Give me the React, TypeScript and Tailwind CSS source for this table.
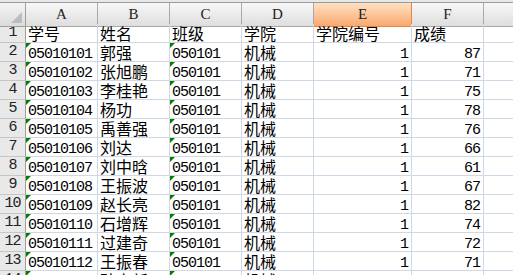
const cols = ['A', 'B', 'C', 'D', 'E', 'F', 'G']

// [学号, 姓名, 班级, 学院, 学院编号, 成绩]
const rows: (string | number)[][] = [
  ['学号', '姓名', '班级', '学院', '学院编号', '成绩'],
  ['05010101', '郭强', '050101', '机械', 1, 87],
  ['05010102', '张旭鹏', '050101', '机械', 1, 71],
  ['05010103', '李桂艳', '050101', '机械', 1, 75],
  ['05010104', '杨功', '050101', '机械', 1, 78],
  ['05010105', '禹善强', '050101', '机械', 1, 76],
  ['05010106', '刘达', '050101', '机械', 1, 66],
  ['05010107', '刘中晗', '050101', '机械', 1, 61],
  ['05010108', '王振波', '050101', '机械', 1, 67],
  ['05010109', '赵长亮', '050101', '机械', 1, 82],
  ['05010110', '石增辉', '050101', '机械', 1, 74],
  ['05010111', '过建奇', '050101', '机械', 1, 72],
  ['05010112', '王振春', '050101', '机械', 1, 71],
  ['05010113', '孙立新', '050101', '机械', 1, 80],
]

const grid = 'grid grid-cols-[26px_72px_72px_72px_72px_98px_72px_72px] w-[556px]'
const cjk = "font-['Noto_Sans_CJK_SC',sans-serif] text-[16px]"
const mono = "font-['Liberation_Mono','Noto_Sans_CJK_SC',monospace] text-[15px] tracking-[-1px]"

function Cell({ value, row }: { value: string | number | undefined; row: number }) {
  const isNum = typeof value === 'number'
  const isText = typeof value === 'string'
  const numericText = isText && /^\d+$/.test(value as string) && row > 0
  const ascii = isText && /^[\x00-\x7f]+$/.test(value as string)

  return (
    <div
      className={`relative h-[19px] border-r border-b border-[#d0d7e5] overflow-hidden whitespace-nowrap leading-[19px] text-black px-[2px] ${
        isNum ? 'text-right pr-[3px]' : ''
      }`}
    >
      {numericText && (
        <div className="absolute left-0 top-0 w-0 h-0 border-t-[5px] border-r-[5px] border-t-[#008000] border-r-transparent" />
      )}
      {value !== undefined && (
        <span className={isNum || ascii ? mono : cjk}>{value}</span>
      )}
    </div>
  )
}

export default function App() {
  return (
    <div className="w-[513px] h-[275px] overflow-hidden bg-white">
      {/* strip above the column headers */}
      <div className="h-[2px] w-[556px] bg-[#e6e8eb]" />
      <div className="h-px w-[556px] bg-[#9a9a9a]" />

      {/* column headers */}
      <div className={`${grid} h-[21px]`}>
        <div className="relative border-r border-b border-[#9e9e9e] bg-gradient-to-b from-[#f4f4f4] to-[#dcdcdc]">
          <div className="absolute right-[3px] bottom-[3px] w-0 h-0 border-b-[11px] border-l-[11px] border-b-[#bdbdbd] border-l-transparent" />
        </div>
        {cols.map((c) => (
          <div
            key={c}
            className={`flex items-center justify-center border-r border-b font-['Liberation_Serif',serif] text-[15px] text-[#222] ${
              c === 'E'
                ? 'bg-gradient-to-b from-[#fde2c2] to-[#f9a86f] border-[#e8873b]'
                : 'bg-gradient-to-b from-[#f8f8f8] to-[#dedede] border-[#a8a8a8]'
            }`}
          >
            {c}
          </div>
        ))}
      </div>

      {/* sheet rows */}
      {rows.map((r, i) => (
        <div key={i} className={grid}>
          <div className="h-[19px] flex items-end justify-center border-r border-r-[#9e9e9e] border-b border-b-[#c6c6c6] bg-[#e9e9e9] font-['Liberation_Mono',monospace] text-[15px] leading-[19px] text-[#222] tracking-[-1px]">
            {i + 1}
          </div>
          {cols.map((c, j) => (
            <Cell key={c} value={r[j]} row={i} />
          ))}
        </div>
      ))}
    </div>
  )
}
